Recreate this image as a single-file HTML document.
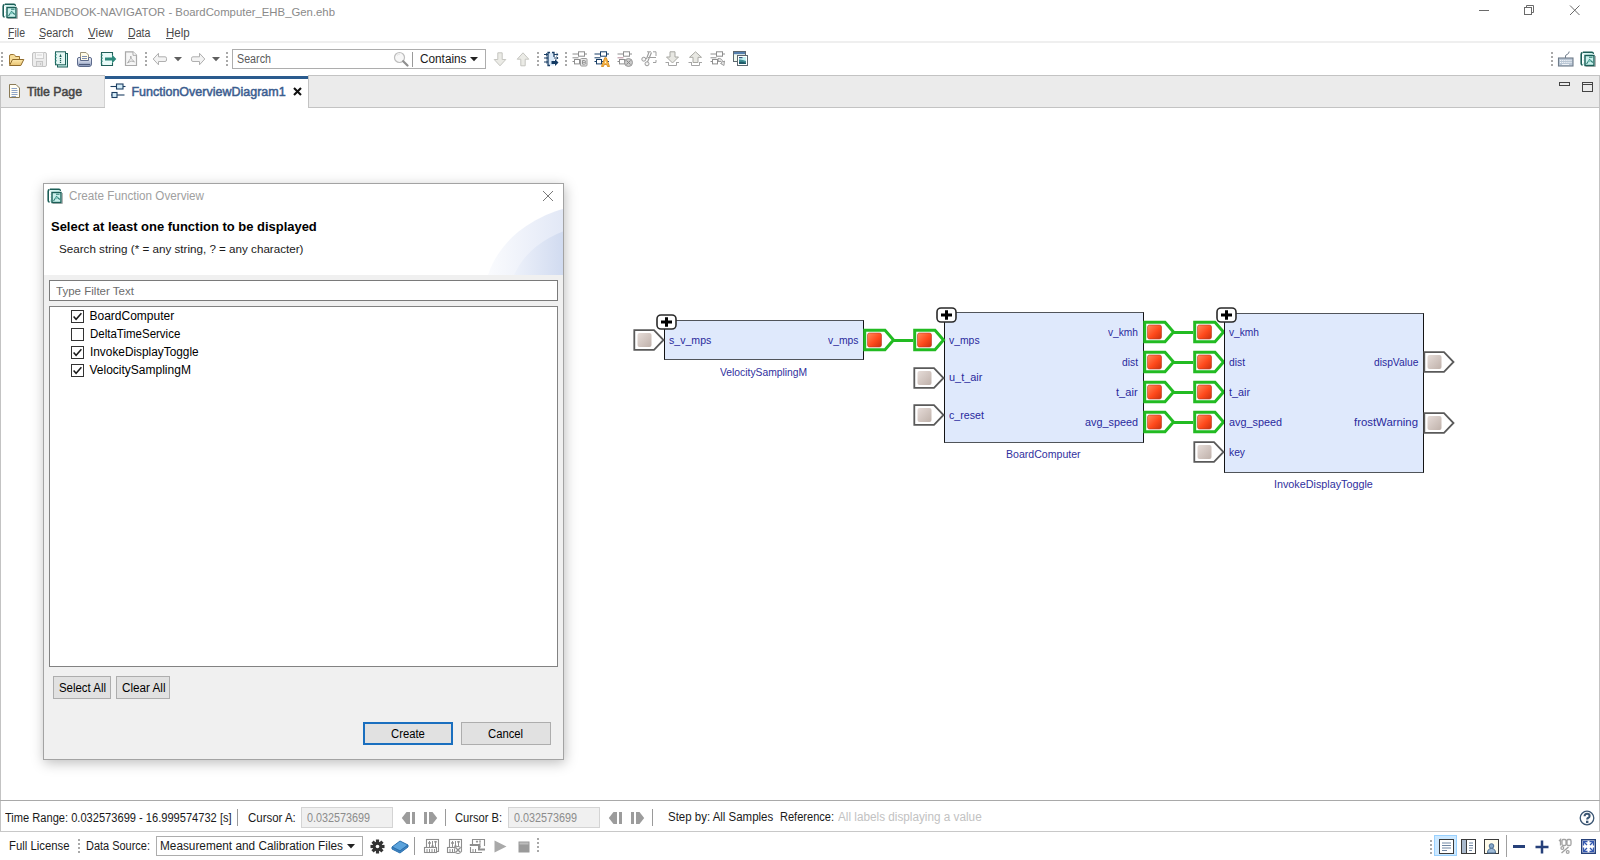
<!DOCTYPE html>
<html><head><meta charset="utf-8"><style>html,body{margin:0;padding:0;width:1600px;height:860px;overflow:hidden;background:#fff;position:relative}svg{display:block}</style></head><body>
<div style="position:absolute;left:0px;top:0px;width:1600px;height:860px;background:#fff"></div>
<div style="position:absolute;left:24.00px;top:6.67px;font:normal 11.5px 'Liberation Sans';line-height:11.5px;white-space:pre;color:#8a8a8a;transform:scaleX(0.9870);transform-origin:0 0;">EHANDBOOK-NAVIGATOR - BoardComputer_EHB_Gen.ehb</div>
<div style="position:absolute;left:1479px;top:10px;width:10px;height:1px;background:#6a6a6a"></div>
<svg style="position:absolute;left:1522px;top:3px;" width="14" height="14" viewBox="0 0 14 14"><rect x="2.5" y="4.5" width="7" height="7" fill="none" stroke="#6a6a6a"/><path d="M4.5 4.5 V2.5 H11.5 V9.5 H9.5" fill="none" stroke="#6a6a6a"/></svg>
<svg style="position:absolute;left:1568px;top:4px;" width="13" height="13" viewBox="0 0 13 13"><path d="M2 1.5 L11.5 11 M11.5 1.5 L2 11" stroke="#6a6a6a" stroke-width="1"/></svg>
<div style="position:absolute;left:8.00px;top:27.04px;font:normal 12px 'Liberation Sans';line-height:12px;white-space:pre;color:#4a4a4a;transform:scaleX(0.8788);transform-origin:0 0;">File</div>
<div style="position:absolute;left:39.00px;top:27.04px;font:normal 12px 'Liberation Sans';line-height:12px;white-space:pre;color:#4a4a4a;transform:scaleX(0.9071);transform-origin:0 0;">Search</div>
<div style="position:absolute;left:88.00px;top:27.04px;font:normal 12px 'Liberation Sans';line-height:12px;white-space:pre;color:#4a4a4a;transform:scaleX(0.9691);transform-origin:0 0;">View</div>
<div style="position:absolute;left:127.75px;top:27.04px;font:normal 12px 'Liberation Sans';line-height:12px;white-space:pre;color:#4a4a4a;transform:scaleX(0.8872);transform-origin:0 0;">Data</div>
<div style="position:absolute;left:165.75px;top:27.04px;font:normal 12px 'Liberation Sans';line-height:12px;white-space:pre;color:#4a4a4a;transform:scaleX(0.9620);transform-origin:0 0;">Help</div>
<div style="position:absolute;left:7.5px;top:38px;width:6px;height:1px;background:#505050"></div>
<div style="position:absolute;left:39px;top:38px;width:6px;height:1px;background:#505050"></div>
<div style="position:absolute;left:88px;top:38px;width:6.5px;height:1px;background:#505050"></div>
<div style="position:absolute;left:128px;top:38px;width:6.5px;height:1px;background:#505050"></div>
<div style="position:absolute;left:166px;top:38px;width:6.5px;height:1px;background:#505050"></div>
<div style="position:absolute;left:0px;top:41px;width:1600px;height:2px;background:#efefef"></div>
<svg style="position:absolute;left:2px;top:3px;" width="17" height="17" viewBox="0 0 17 17">
<defs><linearGradient id="apg" x1="0" y1="0" x2="1" y2="1"><stop offset="0" stop-color="#e6fbf8"/><stop offset="1" stop-color="#a9e3db"/></linearGradient></defs>
<path d="M5.5 15.5 H15.5 V5" fill="none" stroke="#b5b5b5" stroke-width="1"/>
<path d="M3 1.2 H12 Q13.2 1.2 13.2 2.6 V3" fill="none" stroke="#1b5e57" stroke-width="1.5"/>
<path d="M2.6 1.5 Q1.2 1.8 1.2 3.2 V12.6 Q1.2 14 2.6 14" fill="none" stroke="#1b5e57" stroke-width="1.6"/>
<rect x="3" y="2" width="9.5" height="12" fill="url(#apg)"/>
<path d="M2.5 4 L4 4.8 L2.5 5.6 M2.5 7 L4 7.8 L2.5 8.6 M2.5 10 L4 10.8 L2.5 11.6" fill="none" stroke="#fff" stroke-width="0.9"/>
<rect x="5" y="4.5" width="9" height="10" fill="#c9f1ec" stroke="#1b5e57" stroke-width="1.4"/>
<path d="M6.5 13 L9.5 8.5 L12.8 11.5 M9 6.3 H12.5" fill="none" stroke="#2f7d74" stroke-width="1.1"/>
<circle cx="9.5" cy="10" r="1.2" fill="#7fc8bf"/>
</svg>
<div style="position:absolute;left:1px;top:52px;width:2px;height:2px;background:#a9a9a9"></div>
<div style="position:absolute;left:1px;top:56px;width:2px;height:2px;background:#a9a9a9"></div>
<div style="position:absolute;left:1px;top:60px;width:2px;height:2px;background:#a9a9a9"></div>
<div style="position:absolute;left:1px;top:64px;width:2px;height:2px;background:#a9a9a9"></div>
<svg style="position:absolute;left:8px;top:52px;" width="17" height="15" viewBox="0 0 17 15"><defs><linearGradient id="fdg" x1="0" y1="0" x2="0" y2="1"><stop offset="0" stop-color="#fde9ad"/><stop offset="1" stop-color="#e8c270"/></linearGradient></defs>
<path d="M1.5 12.5 V4 Q1.5 2.5 3 2.5 H5.5 Q6.5 2.5 7 3.5 L7.5 4.5 H11.5 V7" fill="#f6dc98" stroke="#9b7431" stroke-width="1"/>
<path d="M1.5 13.5 L4.5 7.5 H15.8 L12.8 13.5 Z" fill="url(#fdg)" stroke="#8e6a2b" stroke-width="1"/></svg>
<svg style="position:absolute;left:31px;top:51px;" width="17" height="17" viewBox="0 0 17 17"><rect x="1.5" y="1.5" width="14" height="14" rx="1.5" fill="#ececec" stroke="#c2c2c2"/><rect x="4.5" y="1.5" width="8" height="6" fill="#f7f7f7" stroke="#cfcfcf"/><path d="M6 4 H11" stroke="#d5d5d5"/><rect x="5.5" y="10.5" width="6" height="5" fill="#e3e3e3" stroke="#c6c6c6"/><path d="M9.5 12 V14" stroke="#c6c6c6"/></svg>
<svg style="position:absolute;left:54px;top:51px;" width="15" height="17" viewBox="0 0 15 17"><rect x="3.5" y="2.5" width="10" height="13.5" fill="#c8efe9" stroke="#1e615a"/>
<rect x="1.5" y="0.8" width="10" height="13" fill="#e4f7f4" stroke="#1e615a"/>
<path d="M0.8 3 L2.5 3.8 L0.8 4.6 M0.8 6 L2.5 6.8 L0.8 7.6 M0.8 9 L2.5 9.8 L0.8 10.6 M0.8 12 L2.5 12.8" fill="none" stroke="#2a8075" stroke-width="0.9"/>
<path d="M6.5 2.8 L5.3 6 H7.7 Z" fill="#1e615a"/><path d="M6.5 7 V12" stroke="#1e615a" stroke-width="1.3" stroke-dasharray="1.2 0.8"/></svg>
<svg style="position:absolute;left:76px;top:51px;" width="17" height="17" viewBox="0 0 17 17"><defs><linearGradient id="prg" x1="0" y1="0" x2="0" y2="1"><stop offset="0" stop-color="#f4f6fb"/><stop offset="1" stop-color="#8e9dc0"/></linearGradient></defs>
<path d="M4.5 9.5 V1.5 H10 L12.5 4 V9.5" fill="#fffbe8" stroke="#9c9378"/>
<path d="M6 5.5 H11 M6 7.5 H11" stroke="#7d8fb2" stroke-width="1"/>
<path d="M1.5 8 Q1.5 6.5 3 6.5 H4.5 V9.5 H12.5 V6.5 H14 Q15.5 6.5 15.5 8 V13 Q15.5 15.5 13 15.5 H4 Q1.5 15.5 1.5 13 Z" fill="url(#prg)" stroke="#5d6b8c"/>
<path d="M3 13.5 H14" stroke="#4e5b7a" stroke-width="1.2"/></svg>
<svg style="position:absolute;left:100px;top:51px;" width="17" height="17" viewBox="0 0 17 17"><path d="M12.5 4.5 V1.5 H1.5 V14.5 H12.5 V12" fill="#e9fbf9" stroke="#215f59" stroke-width="1.1"/>
<path d="M0.8 3.5 L2.5 4.2 L0.8 5 M0.8 6.5 L2.5 7.2 L0.8 8 M0.8 9.5 L2.5 10.2 L0.8 11 M0.8 12.5 L2.5 13.2" fill="none" stroke="#2a8075" stroke-width="0.9"/>
<path d="M5 6.5 H12 V3.6 L16.3 8 L12 12.4 V9.5 H5 Z" fill="#2e8a7c"/></svg>
<svg style="position:absolute;left:124px;top:51px;" width="14" height="16" viewBox="0 0 14 16"><path d="M1.5 0.8 H9 L12.5 4.3 V14.5 H1.5 Z" fill="#f6f6f6" stroke="#a9a9a9" stroke-width="1.2"/><path d="M9 0.8 V4.3 H12.5" fill="#fff" stroke="#a9a9a9"/><path d="M3.5 12 L6.5 7.5 L6.8 5 L7.3 7.8 L10.5 10.8 L7 10 Z" fill="none" stroke="#aaa" stroke-width="0.9"/></svg>
<div style="position:absolute;left:145px;top:52px;width:2px;height:2px;background:#a9a9a9"></div>
<div style="position:absolute;left:145px;top:56px;width:2px;height:2px;background:#a9a9a9"></div>
<div style="position:absolute;left:145px;top:60px;width:2px;height:2px;background:#a9a9a9"></div>
<div style="position:absolute;left:145px;top:64px;width:2px;height:2px;background:#a9a9a9"></div>
<svg style="position:absolute;left:152px;top:52px;" width="16" height="15" viewBox="0 0 16 15"><path d="M1.2 7 L6.5 1.3 V4.8 H13 Q14.5 4.8 14.5 6.3 V8 Q14.5 9.5 13 9.5 H6.5 V12.8 Z" fill="#f3f3f3" stroke="#b0b0b0"/></svg>
<svg style="position:absolute;left:174px;top:57px;" width="8" height="5" viewBox="0 0 8 5"><path d="M0 0 H8 L4 4.2 Z" fill="#5f5f5f"/></svg>
<svg style="position:absolute;left:190px;top:52px;" width="16" height="15" viewBox="0 0 16 15"><path d="M14.8 7 L9.5 1.3 V4.8 H3 Q1.5 4.8 1.5 6.3 V8 Q1.5 9.5 3 9.5 H9.5 V12.8 Z" fill="#f3f3f3" stroke="#b0b0b0"/></svg>
<svg style="position:absolute;left:212px;top:57px;" width="8" height="5" viewBox="0 0 8 5"><path d="M0 0 H8 L4 4.2 Z" fill="#5f5f5f"/></svg>
<div style="position:absolute;left:226px;top:52px;width:2px;height:2px;background:#a9a9a9"></div>
<div style="position:absolute;left:226px;top:56px;width:2px;height:2px;background:#a9a9a9"></div>
<div style="position:absolute;left:226px;top:60px;width:2px;height:2px;background:#a9a9a9"></div>
<div style="position:absolute;left:226px;top:64px;width:2px;height:2px;background:#a9a9a9"></div>
<div style="position:absolute;left:232px;top:49px;width:254px;height:20px;background:#fff;border:1px solid #adadad;box-sizing:border-box"></div>
<div style="position:absolute;left:237.00px;top:53.34px;font:normal 12px 'Liberation Sans';line-height:12px;white-space:pre;color:#5a5a5a;transform:scaleX(0.8940);transform-origin:0 0;">Search</div>
<svg style="position:absolute;left:393px;top:51px;" width="16" height="16" viewBox="0 0 16 16"><circle cx="6.5" cy="6.5" r="5" fill="#f7f7f7" stroke="#bdbdbd" stroke-width="1.2"/><path d="M4 4.5 Q5 3 7 3" stroke="#e0e0e0" fill="none"/><path d="M10.2 10.2 L14.5 14.5" stroke="#8f8f8f" stroke-width="2.2" stroke-linecap="round"/></svg>
<div style="position:absolute;left:412px;top:52px;width:1px;height:15px;background:#9a9a9a"></div>
<div style="position:absolute;left:419.50px;top:53.34px;font:normal 12px 'Liberation Sans';line-height:12px;white-space:pre;color:#1a1a1a;transform:scaleX(0.9815);transform-origin:0 0;">Contains</div>
<svg style="position:absolute;left:470px;top:57px;" width="8" height="5" viewBox="0 0 8 5"><path d="M0 0 H8 L4 4.2 Z" fill="#222"/></svg>
<svg style="position:absolute;left:493px;top:52px;" width="14" height="15" viewBox="0 0 14 15"><path d="M4.8 0.8 H9.2 V7.5 H12.8 L7 13.8 L1.2 7.5 H4.8 Z" fill="#ebebe6" stroke="#c5c5c0"/></svg>
<svg style="position:absolute;left:516px;top:52px;" width="14" height="15" viewBox="0 0 14 15"><path d="M4.8 13.8 H9.2 V7.2 H12.8 L7 0.8 L1.2 7.2 H4.8 Z" fill="#ebebe6" stroke="#c5c5c0"/></svg>
<div style="position:absolute;left:537px;top:52px;width:2px;height:2px;background:#a9a9a9"></div>
<div style="position:absolute;left:537px;top:56px;width:2px;height:2px;background:#a9a9a9"></div>
<div style="position:absolute;left:537px;top:60px;width:2px;height:2px;background:#a9a9a9"></div>
<div style="position:absolute;left:537px;top:64px;width:2px;height:2px;background:#a9a9a9"></div>
<svg style="position:absolute;left:543px;top:51px;" width="16" height="16" viewBox="0 0 16 16"><rect x="5" y="1.5" width="6" height="13" fill="#d9e8f7"/>
<path d="M7 1.5 H5 V14.5 H7 M9 1.5 H11 V6" fill="none" stroke="#1b3f66" stroke-width="1.3"/>
<path d="M1 3.5 H4.5 M1 7 H4.5 M1 11 H4.5 M11 3.5 H15 M11 7 H15" stroke="#1b3f66" stroke-width="1"/>
<path d="M3 2.2 L4.6 3.5 L3 4.8 M3 5.7 L4.6 7 L3 8.3 M3 9.7 L4.6 11 L3 12.3 M13.5 2.2 L15.1 3.5 L13.5 4.8 M13.5 5.7 L15.1 7 L13.5 8.3" fill="none" stroke="#1b3f66" stroke-width="0.9"/>
<path d="M8.5 10 H12 V8 L15.5 11.5 L12 15 V13 H8.5 Z" fill="#123a63"/></svg>
<div style="position:absolute;left:565px;top:52px;width:2px;height:2px;background:#a9a9a9"></div>
<div style="position:absolute;left:565px;top:56px;width:2px;height:2px;background:#a9a9a9"></div>
<div style="position:absolute;left:565px;top:60px;width:2px;height:2px;background:#a9a9a9"></div>
<div style="position:absolute;left:565px;top:64px;width:2px;height:2px;background:#a9a9a9"></div>
<svg style="position:absolute;left:572px;top:51px;" width="16" height="16" viewBox="0 0 16 16"><path d="M0.5 3 H15" stroke="#8e8e8e" stroke-width="1"/><rect x="6.5" y="0.8" width="6" height="4.4" fill="#fff" stroke="#8e8e8e"/>
<path d="M0.5 6.8 H6.5" stroke="#8e8e8e" stroke-width="1"/>
<path d="M0.5 10.5 H15" stroke="#8e8e8e"/><rect x="2.5" y="8.5" width="5" height="4.4" fill="#fff" stroke="#8e8e8e"/><rect x="8.5" y="7.5" width="6.5" height="7.5" rx="1" fill="#e9e9e9" stroke="#9a9a9a"/><path d="M10.5 9.5 H12.5 Q13.5 9.5 13.5 10.5 Q13.5 11.3 12.5 11.3 H10.5 M12.5 11.3 Q13.8 11.3 13.8 12.3 Q13.8 13.2 12.5 13.2 H10.5 V9.5" fill="none" stroke="#8a8a8a" stroke-width="0.9"/></svg>
<svg style="position:absolute;left:594px;top:51px;" width="16" height="16" viewBox="0 0 16 16"><path d="M0.5 3 H15" stroke="#183d66" stroke-width="1"/><rect x="6.5" y="0.8" width="6" height="4.4" fill="#fff" stroke="#183d66"/>
<path d="M0.5 6.8 H6.5" stroke="#183d66" stroke-width="1"/>
<path d="M0.5 10.5 H15" stroke="#183d66"/><rect x="2.5" y="8.5" width="5" height="4.4" fill="#fff" stroke="#183d66"/><path d="M7.5 15.5 L10.7 6.8 H12.3 L15.5 15.5 H13.5 L12.8 13.5 H10.2 L9.5 15.5 Z" fill="#f5b54a" stroke="#d48a1c" stroke-width="0.9"/><path d="M10.8 12 H12.2 L11.5 9.6 Z" fill="#fff3d6"/></svg>
<svg style="position:absolute;left:617px;top:51px;" width="16" height="16" viewBox="0 0 16 16"><path d="M0.5 3 H15" stroke="#8e8e8e" stroke-width="1"/><rect x="6.5" y="0.8" width="6" height="4.4" fill="#fff" stroke="#8e8e8e"/>
<path d="M0.5 6.8 H6.5" stroke="#b58a99" stroke-width="1"/>
<path d="M0.5 10.5 H15" stroke="#8e8e8e"/><rect x="2.5" y="8.5" width="5" height="4.4" fill="#fff" stroke="#8e8e8e"/><circle cx="11.5" cy="11.5" r="4" fill="#c9c9c9" stroke="#9a9a9a"/><path d="M9.5 9.5 L13.5 13.5 M13.5 9.5 L9.5 13.5" stroke="#8a8a8a" stroke-width="1"/></svg>
<svg style="position:absolute;left:641px;top:51px;" width="16" height="16" viewBox="0 0 16 16"><path d="M6 0.8 H10 M12 0.8 H15 V5 M15 9 V11.5 H12" fill="none" stroke="#a0a0a0"/><path d="M8 1 L5.5 8 M10.5 1.5 L6.5 11" stroke="#9a9a9a" stroke-width="1.1"/><path d="M7 6.5 H15" stroke="#a0a0a0"/><circle cx="2.8" cy="8.2" r="2" fill="#f5f5f5" stroke="#9a9a9a"/><circle cx="6" cy="12.8" r="2" fill="#f5f5f5" stroke="#9a9a9a"/></svg>
<svg style="position:absolute;left:665px;top:51px;" width="15" height="16" viewBox="0 0 15 16"><path d="M3.5 14.5 H11.5 V11 M3.5 14.5 V11" fill="none" stroke="#a5a5a5"/><path d="M0.5 11.5 H3.5 M11.5 11.5 H14" stroke="#a5a5a5"/><path d="M5 0.8 H10 V6 H13.5 L7.5 12 L1.5 6 H5 Z" fill="#e8e8e3" stroke="#a8a8a3"/></svg>
<svg style="position:absolute;left:688px;top:51px;" width="15" height="16" viewBox="0 0 15 16"><path d="M3.5 14.5 H11.5 V11 M3.5 14.5 V11" fill="none" stroke="#a5a5a5"/><path d="M0.5 11.5 H3.5 M11.5 11.5 H14" stroke="#a5a5a5"/><path d="M5 11.5 H10 V6.3 H13.5 L7.5 0.8 L1.5 6.3 H5 Z" fill="#e8e8e3" stroke="#a8a8a3"/></svg>
<svg style="position:absolute;left:710px;top:51px;" width="16" height="16" viewBox="0 0 16 16"><path d="M0.5 3 H15" stroke="#8e8e8e" stroke-width="1"/><rect x="6.5" y="0.8" width="6" height="4.4" fill="#fff" stroke="#8e8e8e"/>
<path d="M0.5 6.8 H6.5" stroke="#8e8e8e" stroke-width="1"/>
<path d="M0.5 10.5 H15" stroke="#8e8e8e"/><rect x="2.5" y="8.5" width="5" height="4.4" fill="#fff" stroke="#8e8e8e"/><path d="M8 7.5 Q12 7 13 11 L14.5 10 L14 14.5 L10.5 12.5 L12 12 Q11.5 9.5 8.5 10.5 Z" fill="#e6e6e6" stroke="#9a9a9a" stroke-width="0.9"/></svg>
<svg style="position:absolute;left:732px;top:50px;" width="17" height="17" viewBox="0 0 17 17"><rect x="1.5" y="1.5" width="12" height="10" fill="#f2faf0" stroke="#5d6870"/><rect x="2" y="2" width="11" height="2.2" fill="#557fae"/>
<rect x="5.5" y="5.5" width="10" height="10" fill="#fff" stroke="#5d6870"/><rect x="7" y="7" width="7" height="7" fill="#c5f2f2"/><path d="M7 9.5 Q10 9 14 11 V14 H7 Z" fill="#3f8c92"/><path d="M7 12 Q10 11 14 13 V14 H7 Z" fill="#1f5a68"/><path d="M7 7.6 H10.5" stroke="#34577f" stroke-width="1.2"/></svg>
<div style="position:absolute;left:1551px;top:52px;width:2px;height:2px;background:#a9a9a9"></div>
<div style="position:absolute;left:1551px;top:56px;width:2px;height:2px;background:#a9a9a9"></div>
<div style="position:absolute;left:1551px;top:60px;width:2px;height:2px;background:#a9a9a9"></div>
<div style="position:absolute;left:1551px;top:64px;width:2px;height:2px;background:#a9a9a9"></div>
<svg style="position:absolute;left:1557px;top:50px;" width="17" height="17" viewBox="0 0 17 17"><rect x="1.5" y="8" width="14.5" height="8" fill="#b9c6d4" stroke="#6f7c8a" stroke-width="1.1"/><path d="M3 10.5 H14.5 M3 12.5 H14.5" stroke="#f4f7fb" stroke-width="1" stroke-dasharray="1.2 0.9"/><path d="M5 14.5 H12" stroke="#f4f7fb" stroke-width="0.9"/><path d="M8.5 8 V6 Q8.5 5 10 4.5 Q12 3.8 12.2 1.5" fill="none" stroke="#6f7c8a" stroke-width="1"/></svg>
<svg style="position:absolute;left:1580px;top:51px;" width="17" height="17" viewBox="0 0 17 17">
<defs><linearGradient id="apg" x1="0" y1="0" x2="1" y2="1"><stop offset="0" stop-color="#e6fbf8"/><stop offset="1" stop-color="#a9e3db"/></linearGradient></defs>
<path d="M5.5 15.5 H15.5 V5" fill="none" stroke="#b5b5b5" stroke-width="1"/>
<path d="M3 1.2 H12 Q13.2 1.2 13.2 2.6 V3" fill="none" stroke="#1b5e57" stroke-width="1.5"/>
<path d="M2.6 1.5 Q1.2 1.8 1.2 3.2 V12.6 Q1.2 14 2.6 14" fill="none" stroke="#1b5e57" stroke-width="1.6"/>
<rect x="3" y="2" width="9.5" height="12" fill="url(#apg)"/>
<path d="M2.5 4 L4 4.8 L2.5 5.6 M2.5 7 L4 7.8 L2.5 8.6 M2.5 10 L4 10.8 L2.5 11.6" fill="none" stroke="#fff" stroke-width="0.9"/>
<rect x="5" y="4.5" width="9" height="10" fill="#c9f1ec" stroke="#1b5e57" stroke-width="1.4"/>
<path d="M6.5 13 L9.5 8.5 L12.8 11.5 M9 6.3 H12.5" fill="none" stroke="#2f7d74" stroke-width="1.1"/>
<circle cx="9.5" cy="10" r="1.2" fill="#7fc8bf"/>
</svg>
<div style="position:absolute;left:0px;top:75px;width:1600px;height:33px;background:#ebebeb;border:1px solid #c3c3c3;box-sizing:border-box"></div>
<div style="position:absolute;left:104px;top:76px;width:1px;height:31px;background:#d2d2d2"></div>
<svg style="position:absolute;left:8px;top:83px;" width="13" height="16" viewBox="0 0 13 16"><path d="M1.5 1.5 H8 L11.5 5 V14.5 H1.5 Z" fill="#fffdf4" stroke="#8a7a55"/><path d="M3.5 5.5 H9 M3.5 7.5 H9.5 M3.5 9.5 H9.5 M3.5 11.5 H9.5 M3.5 13.5 H8" stroke="#8ea4c8"/></svg>
<div style="position:absolute;left:27.00px;top:85.62px;font:normal 12.5px 'Liberation Sans';line-height:12.5px;white-space:pre;color:#454545;transform:scaleX(0.9852);transform-origin:0 0;-webkit-text-stroke:0.5px #454545;">Title Page</div>
<div style="position:absolute;left:105px;top:75px;width:204px;height:33px;background:#fff;border-right:1px solid #c3c3c3;box-sizing:border-box"></div>
<div style="position:absolute;left:105px;top:75px;width:203px;height:1px;background:#fff"></div>
<div style="position:absolute;left:105px;top:76px;width:203px;height:3px;background:#2a5b8e"></div>
<svg style="position:absolute;left:110px;top:83px;" width="16" height="16" viewBox="0 0 16 16"><path d="M0.5 3.5 H15.5" stroke="#1d3f63" stroke-width="1.1"/><rect x="6.5" y="1" width="6.5" height="5" fill="#d4ecf8" stroke="#1d3f63" stroke-width="1.1"/><path d="M1 12 H14.5" stroke="#1d3f63" stroke-width="1.1"/><rect x="2" y="9.5" width="5" height="5" fill="#d4ecf8" stroke="#1d3f63" stroke-width="1.1"/></svg>
<div style="position:absolute;left:131.40px;top:85.62px;font:normal 12.5px 'Liberation Sans';line-height:12.5px;white-space:pre;color:#3b5d8f;-webkit-text-stroke:0.5px #3b5d8f;">FunctionOverviewDiagram1</div>
<svg style="position:absolute;left:293px;top:87px;" width="9" height="9" viewBox="0 0 9 9"><path d="M1 1 L8 8 M8 1 L1 8" stroke="#111" stroke-width="2.1"/></svg>
<div style="position:absolute;left:1559px;top:82px;width:11px;height:4px;border:1px solid #444;box-sizing:border-box"></div>
<div style="position:absolute;left:1582px;top:82px;width:11px;height:10px;border:1px solid #444;box-sizing:border-box"></div>
<div style="position:absolute;left:1583px;top:84px;width:9px;height:1px;background:#444"></div>
<div style="position:absolute;left:0px;top:108px;width:1px;height:692px;background:#c3c3c3"></div>
<div style="position:absolute;left:1599px;top:108px;width:1px;height:692px;background:#c3c3c3"></div>
<div style="position:absolute;left:0px;top:800px;width:1600px;height:1px;background:#a9a9a9"></div>
<div style="position:absolute;left:0px;top:801px;width:1px;height:30px;background:#c3c3c3"></div>
<div style="position:absolute;left:1599px;top:801px;width:1px;height:30px;background:#c3c3c3"></div>
<div style="position:absolute;left:0px;top:831px;width:1600px;height:1px;background:#c8c8c8"></div>
<div style="position:absolute;left:5.00px;top:812.04px;font:normal 12px 'Liberation Sans';line-height:12px;white-space:pre;color:#1a1a1a;transform:scaleX(0.9246);transform-origin:0 0;">Time Range: 0.032573699 - 16.999574732 [s]</div>
<div style="position:absolute;left:237px;top:809px;width:1px;height:17px;background:#9a9a9a"></div>
<div style="position:absolute;left:247.60px;top:812.04px;font:normal 12px 'Liberation Sans';line-height:12px;white-space:pre;color:#1a1a1a;transform:scaleX(0.9557);transform-origin:0 0;">Cursor A:</div>
<div style="position:absolute;left:301px;top:807px;width:92px;height:21px;background:#f0f0f0;border:1px solid #d4d4d4;box-sizing:border-box"></div>
<div style="position:absolute;left:307.00px;top:812.04px;font:normal 12px 'Liberation Sans';line-height:12px;white-space:pre;color:#8c8c8c;transform:scaleX(0.8990);transform-origin:0 0;">0.032573699</div>
<svg style="position:absolute;left:401px;top:812px;" width="15" height="12" viewBox="0 0 15 12"><path d="M0.8 6 L5.5 0 H9 V12 H5.5 Z" fill="#9c9c9c"/><rect x="11" y="0" width="3" height="12" fill="#9c9c9c"/></svg>
<svg style="position:absolute;left:423px;top:812px;" width="15" height="12" viewBox="0 0 15 12"><rect x="1" y="0" width="3" height="12" fill="#9c9c9c"/><path d="M6 0 H9.5 L14.2 6 L9.5 12 H6 Z" fill="#9c9c9c"/></svg>
<div style="position:absolute;left:445px;top:809px;width:1px;height:17px;background:#9a9a9a"></div>
<div style="position:absolute;left:455.40px;top:812.04px;font:normal 12px 'Liberation Sans';line-height:12px;white-space:pre;color:#1a1a1a;transform:scaleX(0.9292);transform-origin:0 0;">Cursor B:</div>
<div style="position:absolute;left:508px;top:807px;width:92px;height:21px;background:#f0f0f0;border:1px solid #d4d4d4;box-sizing:border-box"></div>
<div style="position:absolute;left:514.00px;top:812.04px;font:normal 12px 'Liberation Sans';line-height:12px;white-space:pre;color:#8c8c8c;transform:scaleX(0.8990);transform-origin:0 0;">0.032573699</div>
<svg style="position:absolute;left:607.5px;top:812px;" width="15" height="12" viewBox="0 0 15 12"><path d="M0.8 6 L5.5 0 H9 V12 H5.5 Z" fill="#9c9c9c"/><rect x="11" y="0" width="3" height="12" fill="#9c9c9c"/></svg>
<svg style="position:absolute;left:629.5px;top:812px;" width="15" height="12" viewBox="0 0 15 12"><rect x="1" y="0" width="3" height="12" fill="#9c9c9c"/><path d="M6 0 H9.5 L14.2 6 L9.5 12 H6 Z" fill="#9c9c9c"/></svg>
<div style="position:absolute;left:652px;top:809px;width:1px;height:17px;background:#9a9a9a"></div>
<div style="position:absolute;left:668.30px;top:811.04px;font:normal 12px 'Liberation Sans';line-height:12px;white-space:pre;color:#1a1a1a;transform:scaleX(0.9558);transform-origin:0 0;">Step by: All Samples</div>
<div style="position:absolute;left:780.30px;top:811.04px;font:normal 12px 'Liberation Sans';line-height:12px;white-space:pre;color:#1a1a1a;transform:scaleX(0.9199);transform-origin:0 0;">Reference:</div>
<div style="position:absolute;left:838.30px;top:811.04px;font:normal 12px 'Liberation Sans';line-height:12px;white-space:pre;color:#c2c2c2;transform:scaleX(0.9791);transform-origin:0 0;">All labels displaying a value</div>
<svg style="position:absolute;left:1578px;top:809px;" width="18" height="18" viewBox="0 0 18 18"><circle cx="9" cy="9" r="6.8" fill="#fff" stroke="#3b5673" stroke-width="1.3"/><path d="M6.6 7.2 Q6.6 4.8 9.1 4.8 Q11.6 4.8 11.6 6.9 Q11.6 8.3 10 9 Q9.2 9.4 9.2 10.6" fill="none" stroke="#3b5673" stroke-width="2.1"/><rect x="8" y="11.7" width="2.4" height="2.4" fill="#3b5673"/></svg>
<div style="position:absolute;left:8.50px;top:840.04px;font:normal 12px 'Liberation Sans';line-height:12px;white-space:pre;color:#1a1a1a;transform:scaleX(0.9449);transform-origin:0 0;">Full License</div>
<div style="position:absolute;left:78px;top:839px;width:2px;height:2px;background:#a9a9a9"></div>
<div style="position:absolute;left:78px;top:843px;width:2px;height:2px;background:#a9a9a9"></div>
<div style="position:absolute;left:78px;top:847px;width:2px;height:2px;background:#a9a9a9"></div>
<div style="position:absolute;left:78px;top:851px;width:2px;height:2px;background:#a9a9a9"></div>
<div style="position:absolute;left:86.00px;top:840.04px;font:normal 12px 'Liberation Sans';line-height:12px;white-space:pre;color:#1a1a1a;transform:scaleX(0.9137);transform-origin:0 0;">Data Source:</div>
<div style="position:absolute;left:156px;top:836px;width:207px;height:20px;background:#fff;border:1px solid #adadad;box-sizing:border-box"></div>
<div style="position:absolute;left:160.30px;top:840.04px;font:normal 12px 'Liberation Sans';line-height:12px;white-space:pre;color:#1a1a1a;transform:scaleX(0.9834);transform-origin:0 0;">Measurement and Calibration Files</div>
<svg style="position:absolute;left:347px;top:844px;" width="8" height="5" viewBox="0 0 8 5"><path d="M0 0 H8 L4 4.5 Z" fill="#222"/></svg>
<svg style="position:absolute;left:370px;top:839px;" width="15" height="15" viewBox="0 0 15 15"><g transform="translate(7.5 7.5)"><circle r="4.8" fill="#333"/><g fill="#333"><rect x="-1.6" y="-7" width="3.2" height="3.5" transform="rotate(0)"/><rect x="-1.6" y="-7" width="3.2" height="3.5" transform="rotate(45)"/><rect x="-1.6" y="-7" width="3.2" height="3.5" transform="rotate(90)"/><rect x="-1.6" y="-7" width="3.2" height="3.5" transform="rotate(135)"/><rect x="-1.6" y="-7" width="3.2" height="3.5" transform="rotate(180)"/><rect x="-1.6" y="-7" width="3.2" height="3.5" transform="rotate(225)"/><rect x="-1.6" y="-7" width="3.2" height="3.5" transform="rotate(270)"/><rect x="-1.6" y="-7" width="3.2" height="3.5" transform="rotate(315)"/></g><circle r="1.8" fill="#fff"/></g></svg>
<svg style="position:absolute;left:391px;top:839px;" width="18" height="15" viewBox="0 0 18 15"><path d="M1 8 L9 2 L17 6 L9 12 Z" fill="#5ba3dc" stroke="#2a6fae"/><path d="M1 8 V10 L9 14 L17 8 V6 L9 12 Z" fill="#3e86c4" stroke="#2a6fae"/></svg>
<div style="position:absolute;left:414px;top:837px;width:1px;height:18px;background:#9a9a9a"></div>
<svg style="position:absolute;left:423px;top:838px;" width="17" height="17" viewBox="0 0 17 17"><rect x="3.5" y="1.5" width="12" height="12" fill="#fff" stroke="#8e8e8e" stroke-width="1.1"/><path d="M6.5 3 V9.5 M9.5 3 V9.5 M12.5 3 V9.5" stroke="#8e8e8e"/><rect x="5.3" y="4" width="2.4" height="2" fill="#8e8e8e"/><rect x="8.3" y="7.5" width="2.4" height="2" fill="#8e8e8e"/><rect x="11.3" y="3" width="2.4" height="1.6" fill="#8e8e8e"/><rect x="1.5" y="9.5" width="12" height="5" fill="#fff" stroke="#8e8e8e" stroke-width="1.1"/><path d="M4 11 V14 M6.5 11 V14 M9 11 V14 M11.5 11 V14" stroke="#8e8e8e"/></svg>
<svg style="position:absolute;left:446px;top:838px;" width="17" height="17" viewBox="0 0 17 17"><rect x="3.5" y="1.5" width="12" height="12" fill="#fff" stroke="#8e8e8e" stroke-width="1.1"/><path d="M6.5 3 V9.5 M9.5 3 V9.5 M12.5 3 V9.5" stroke="#8e8e8e"/><rect x="5.3" y="4" width="2.4" height="2" fill="#8e8e8e"/><rect x="8.3" y="7.5" width="2.4" height="2" fill="#8e8e8e"/><rect x="11.3" y="3" width="2.4" height="1.6" fill="#8e8e8e"/><rect x="1.5" y="9.5" width="12" height="5" fill="#fff" stroke="#8e8e8e" stroke-width="1.1"/><path d="M4 11 V14 M6.5 11 V14 M9 11 V14 M11.5 11 V14" stroke="#8e8e8e"/><circle cx="12" cy="12" r="3.6" fill="#fff" stroke="#8e8e8e" stroke-width="1"/><path d="M10 10 L14 14 M14 10 L10 14" stroke="#8e8e8e" stroke-width="1.3"/></svg>
<svg style="position:absolute;left:469px;top:838px;" width="17" height="17" viewBox="0 0 17 17"><path d="M3.5 6 V1.5 H15.5 V8" fill="none" stroke="#8e8e8e" stroke-width="1.1"/><path d="M7 4 L8 2.8 L9 4 Z M11 3 V9 M10 3 H12 M10 9 H12" fill="#8e8e8e" stroke="#8e8e8e" stroke-width="0.9"/><path d="M0.8 7 H10 V11.5 H16" fill="none" stroke="#8e8e8e" stroke-width="2"/><path d="M1.5 9 V14.5 H13" fill="none" stroke="#8e8e8e" stroke-width="1.1"/><path d="M4 11 V14 M6.5 11 V14" stroke="#8e8e8e"/></svg>
<svg style="position:absolute;left:493.5px;top:840px;" width="13" height="13" viewBox="0 0 13 13"><path d="M0.5 0.5 L12.5 6.5 L0.5 12.5 Z" fill="#a9a9a9"/></svg>
<svg style="position:absolute;left:517.5px;top:841px;" width="12" height="12" viewBox="0 0 12 12"><rect x="0.5" y="0.5" width="11" height="11" fill="#9a9a9a"/><rect x="1.5" y="1.5" width="9" height="2" fill="#bcbcbc"/></svg>
<div style="position:absolute;left:536.5px;top:838px;width:2px;height:2px;background:#a9a9a9"></div>
<div style="position:absolute;left:536.5px;top:842px;width:2px;height:2px;background:#a9a9a9"></div>
<div style="position:absolute;left:536.5px;top:846px;width:2px;height:2px;background:#a9a9a9"></div>
<div style="position:absolute;left:536.5px;top:850px;width:2px;height:2px;background:#a9a9a9"></div>
<div style="position:absolute;left:1430px;top:840px;width:2px;height:2px;background:#a9a9a9"></div>
<div style="position:absolute;left:1430px;top:844px;width:2px;height:2px;background:#a9a9a9"></div>
<div style="position:absolute;left:1430px;top:848px;width:2px;height:2px;background:#a9a9a9"></div>
<div style="position:absolute;left:1430px;top:852px;width:2px;height:2px;background:#a9a9a9"></div>
<div style="position:absolute;left:1434px;top:835px;width:23px;height:21px;background:#cce8ff;border:1px solid #99d1ff;box-sizing:border-box"></div>
<svg style="position:absolute;left:1439px;top:839px;" width="15" height="15" viewBox="0 0 15 15"><rect x="0.5" y="0.5" width="14" height="14" fill="#fff" stroke="#3a3a3a"/><path d="M3 4 H12 M3 6.5 H12 M3 9 H12 M3 11.5 H8" stroke="#6f86a3"/></svg>
<svg style="position:absolute;left:1461px;top:839px;" width="15" height="15" viewBox="0 0 15 15"><rect x="0.5" y="0.5" width="14" height="14" fill="#fff" stroke="#3a3a3a"/><rect x="1" y="1" width="4.5" height="13" fill="#a9b9cc"/><path d="M5.5 0.5 V14.5" stroke="#3a3a3a"/><path d="M8 4 H12 M8 6.5 H12 M8 9 H12 M8 11.5 H11" stroke="#6f86a3"/></svg>
<svg style="position:absolute;left:1484px;top:839px;" width="15" height="15" viewBox="0 0 15 15"><rect x="0.5" y="0.5" width="14" height="14" fill="#fffbea" stroke="#3a3a3a"/><circle cx="7.5" cy="7" r="2.3" fill="#87a7c7" stroke="#4b6d90"/><path d="M3.5 14 Q3.5 9.5 7.5 9.5 Q11.5 9.5 11.5 14 Z" fill="#9fbad6" stroke="#4b6d90"/></svg>
<div style="position:absolute;left:1506px;top:835px;width:1px;height:22px;background:#a0a0a0"></div>
<div style="position:absolute;left:1513px;top:845px;width:12px;height:2.5px;background:#26407a"></div>
<svg style="position:absolute;left:1535px;top:840px;" width="14" height="14" viewBox="0 0 14 14"><path d="M7 0.5 V13.5 M0.5 7 H13.5" stroke="#26407a" stroke-width="2.5"/></svg>
<svg style="position:absolute;left:1558px;top:838px;" width="14" height="16" viewBox="0 0 14 16"><path d="M1 3 L2.5 1.5 V7.5 M5 1.5 H7 Q8 1.5 8 3 V6 Q8 7.5 7 7.5 H5 Q4 7.5 4 6 V3 Q4 1.5 5 1.5 Z M10 1.5 H12 Q13 1.5 13 3 V6 Q13 7.5 12 7.5 H10 Q9 7.5 9 6 V3 Q9 1.5 10 1.5 Z" fill="none" stroke="#a2a2a2" stroke-width="1.3"/><path d="M3.5 15 L10.5 9" stroke="#a2a2a2" stroke-width="1.4"/><circle cx="4.3" cy="10" r="1.4" fill="none" stroke="#a2a2a2" stroke-width="1.2"/><circle cx="9.7" cy="14" r="1.4" fill="none" stroke="#a2a2a2" stroke-width="1.2"/></svg>
<svg style="position:absolute;left:1580px;top:838px;" width="17" height="17" viewBox="0 0 17 17"><rect x="1.7" y="1.7" width="13.6" height="13.6" fill="#fff" stroke="#26407a" stroke-width="1.4"/><path d="M4 4 L7 7 M13 4 L10 7 M4 13 L7 10 M13 13 L10 10" stroke="#3458b0" stroke-width="1.4"/><path d="M3.5 7.5 V3.5 H7.5 M9.5 3.5 H13.5 V7.5 M13.5 9.5 V13.5 H9.5 M7.5 13.5 H3.5 V9.5" fill="none" stroke="#3458b0" stroke-width="1.3"/></svg>
<div style="position:absolute;left:43px;top:183px;width:521px;height:577px;background:#f0f0f0;border:1px solid #a3a3a3;box-sizing:border-box;box-shadow:1px 3px 12px rgba(0,0,0,0.26)"></div>
<div style="position:absolute;left:44px;top:184px;width:519px;height:91px;background:#fff"></div>
<svg style="position:absolute;left:44px;top:184px;" width="519" height="91" viewBox="0 0 519 91">
<defs>
<linearGradient id="g1" gradientUnits="userSpaceOnUse" x1="440" x2="519" y1="0" y2="0"><stop offset="0" stop-color="#fbfcfe"/><stop offset="1" stop-color="#e2e8f6"/></linearGradient>
<linearGradient id="g2" gradientUnits="userSpaceOnUse" x1="470" x2="519" y1="0" y2="0"><stop offset="0" stop-color="#edf1fa"/><stop offset="1" stop-color="#d1dbf0"/></linearGradient>
</defs>
<ellipse cx="556" cy="116" rx="116" ry="96" fill="url(#g1)"/>
<ellipse cx="556" cy="116" rx="91" ry="75" fill="url(#g2)"/>
</svg>
<svg style="position:absolute;left:47px;top:188px;" width="17" height="17" viewBox="0 0 17 17">
<defs><linearGradient id="apg" x1="0" y1="0" x2="1" y2="1"><stop offset="0" stop-color="#e6fbf8"/><stop offset="1" stop-color="#a9e3db"/></linearGradient></defs>
<path d="M5.5 15.5 H15.5 V5" fill="none" stroke="#b5b5b5" stroke-width="1"/>
<path d="M3 1.2 H12 Q13.2 1.2 13.2 2.6 V3" fill="none" stroke="#1b5e57" stroke-width="1.5"/>
<path d="M2.6 1.5 Q1.2 1.8 1.2 3.2 V12.6 Q1.2 14 2.6 14" fill="none" stroke="#1b5e57" stroke-width="1.6"/>
<rect x="3" y="2" width="9.5" height="12" fill="url(#apg)"/>
<path d="M2.5 4 L4 4.8 L2.5 5.6 M2.5 7 L4 7.8 L2.5 8.6 M2.5 10 L4 10.8 L2.5 11.6" fill="none" stroke="#fff" stroke-width="0.9"/>
<rect x="5" y="4.5" width="9" height="10" fill="#c9f1ec" stroke="#1b5e57" stroke-width="1.4"/>
<path d="M6.5 13 L9.5 8.5 L12.8 11.5 M9 6.3 H12.5" fill="none" stroke="#2f7d74" stroke-width="1.1"/>
<circle cx="9.5" cy="10" r="1.2" fill="#7fc8bf"/>
</svg>
<div style="position:absolute;left:68.75px;top:189.74px;font:normal 12px 'Liberation Sans';line-height:12px;white-space:pre;color:#a0a0a0;transform:scaleX(0.9731);transform-origin:0 0;">Create Function Overview</div>
<svg style="position:absolute;left:542px;top:190px;" width="12" height="12" viewBox="0 0 12 12"><path d="M1 1 L11 11 M11 1 L1 11" stroke="#6a6a6a" stroke-width="0.9"/></svg>
<div style="position:absolute;left:50.60px;top:220.62px;font:bold 12.5px 'Liberation Sans';line-height:12.5px;white-space:pre;color:#000;transform:scaleX(1.0370);transform-origin:0 0;">Select at least one function to be displayed</div>
<div style="position:absolute;left:58.75px;top:244.37px;font:normal 11.5px 'Liberation Sans';line-height:11.5px;white-space:pre;color:#1a1a1a;transform:scaleX(1.0119);transform-origin:0 0;">Search string (* = any string, ? = any character)</div>
<div style="position:absolute;left:49px;top:280px;width:509px;height:21px;background:#fff;border:1px solid #7a7a7a;box-sizing:border-box"></div>
<div style="position:absolute;left:55.50px;top:285.87px;font:normal 11.5px 'Liberation Sans';line-height:11.5px;white-space:pre;color:#6d6d6d;transform:scaleX(1.0030);transform-origin:0 0;">Type Filter Text</div>
<div style="position:absolute;left:49px;top:306px;width:509px;height:361px;background:#fff;border:1px solid #828282;box-sizing:border-box"></div>
<svg style="position:absolute;left:71px;top:310px;" width="13" height="13" viewBox="0 0 13 13"><rect x="0.5" y="0.5" width="12" height="12" fill="#fff" stroke="#333"/><path d="M2.6 6.4 L5.1 9.3 L10.4 3.3" fill="none" stroke="#1a1a1a" stroke-width="1.5"/></svg>
<div style="position:absolute;left:89.50px;top:309.94px;font:normal 12px 'Liberation Sans';line-height:12px;white-space:pre;color:#000;">BoardComputer</div>
<svg style="position:absolute;left:71px;top:328px;" width="13" height="13" viewBox="0 0 13 13"><rect x="0.5" y="0.5" width="12" height="12" fill="#fff" stroke="#333"/></svg>
<div style="position:absolute;left:89.50px;top:327.94px;font:normal 12px 'Liberation Sans';line-height:12px;white-space:pre;color:#000;transform:scaleX(0.9581);transform-origin:0 0;">DeltaTimeService</div>
<svg style="position:absolute;left:71px;top:346px;" width="13" height="13" viewBox="0 0 13 13"><rect x="0.5" y="0.5" width="12" height="12" fill="#fff" stroke="#333"/><path d="M2.6 6.4 L5.1 9.3 L10.4 3.3" fill="none" stroke="#1a1a1a" stroke-width="1.5"/></svg>
<div style="position:absolute;left:89.50px;top:345.94px;font:normal 12px 'Liberation Sans';line-height:12px;white-space:pre;color:#000;transform:scaleX(0.9867);transform-origin:0 0;">InvokeDisplayToggle</div>
<svg style="position:absolute;left:71px;top:364px;" width="13" height="13" viewBox="0 0 13 13"><rect x="0.5" y="0.5" width="12" height="12" fill="#fff" stroke="#333"/><path d="M2.6 6.4 L5.1 9.3 L10.4 3.3" fill="none" stroke="#1a1a1a" stroke-width="1.5"/></svg>
<div style="position:absolute;left:89.50px;top:363.94px;font:normal 12px 'Liberation Sans';line-height:12px;white-space:pre;color:#000;">VelocitySamplingM</div>
<div style="position:absolute;left:53px;top:676px;width:58px;height:23px;background:#e1e1e1;border:1px solid #adadad;box-sizing:border-box"></div>
<div style="position:absolute;left:58.70px;top:681.84px;font:normal 12px 'Liberation Sans';line-height:12px;white-space:pre;color:#000;transform:scaleX(0.9522);transform-origin:0 0;">Select All</div>
<div style="position:absolute;left:116px;top:676px;width:54px;height:23px;background:#e1e1e1;border:1px solid #adadad;box-sizing:border-box"></div>
<div style="position:absolute;left:121.50px;top:681.84px;font:normal 12px 'Liberation Sans';line-height:12px;white-space:pre;color:#000;transform:scaleX(0.9734);transform-origin:0 0;">Clear All</div>
<div style="position:absolute;left:363px;top:722px;width:90px;height:23px;background:#e1e1e1;border:2px solid #1a6fbf;box-sizing:border-box"></div>
<div style="position:absolute;left:391.40px;top:727.84px;font:normal 12px 'Liberation Sans';line-height:12px;white-space:pre;color:#000;transform:scaleX(0.9381);transform-origin:0 0;">Create</div>
<div style="position:absolute;left:461px;top:722px;width:90px;height:23px;background:#e1e1e1;border:1px solid #adadad;box-sizing:border-box"></div>
<div style="position:absolute;left:488.40px;top:727.84px;font:normal 12px 'Liberation Sans';line-height:12px;white-space:pre;color:#000;transform:scaleX(0.9395);transform-origin:0 0;">Cancel</div>
<div style="position:absolute;left:664px;top:320px;width:200px;height:40px;background:#dfe9fc;border:1px solid;border-color:#50545a #141414;box-sizing:border-box"></div>
<svg style="position:absolute;left:655.5px;top:313.8px;" width="21" height="16" viewBox="0 0 21 16"><rect x="1" y="1" width="19" height="14" rx="4" fill="#fff" stroke="#2a2a2a" stroke-width="1.6"/><path d="M10.5 3.2 V12.8 M5 8 H16" stroke="#000" stroke-width="3"/></svg>
<svg style="position:absolute;left:633px;top:328.3px;" width="34" height="24" viewBox="0 0 34 24"><defs><linearGradient id="q633340" x1="0" y1="0" x2="1" y2="1"><stop offset="0" stop-color="#e6dcd8"/><stop offset="1" stop-color="#bfb1aa"/></linearGradient></defs>
<path d="M1.3 2.2 H21 L30.5 12 L21 21.8 H1.3 Z" fill="#fff" stroke="#5a5a5a" stroke-width="1.8"/>
<rect x="4.5" y="5" width="14" height="14" rx="2" fill="url(#q633340)"/></svg>
<svg style="position:absolute;left:862.7px;top:328px;" width="34" height="24" viewBox="0 0 34 24"><defs><linearGradient id="r862340" x1="0" y1="0" x2="1" y2="1"><stop offset="0" stop-color="#ff8a5c"/><stop offset="0.55" stop-color="#ff4a1c"/><stop offset="1" stop-color="#c8300e"/></linearGradient></defs>
<path d="M1.7 2.2 H22 L30.5 12 L22 21.8 H1.7 Z" fill="#fff" stroke="#22bb22" stroke-width="3" stroke-linejoin="miter"/>
<rect x="4.5" y="5" width="14" height="14" rx="2" fill="url(#r862340)" stroke="#b83a20" stroke-width="0.6"/></svg>
<div style="position:absolute;left:668.60px;top:335.49px;font:normal 11px 'Liberation Sans';line-height:11px;white-space:pre;color:#2a2a9c;transform:scaleX(0.9607);transform-origin:0 0;">s_v_mps</div>
<div style="position:absolute;left:828.30px;top:335.49px;font:normal 11px 'Liberation Sans';line-height:11px;white-space:pre;color:#2a2a9c;transform:scaleX(0.9381);transform-origin:0 0;">v_mps</div>
<div style="position:absolute;left:720.00px;top:367.09px;font:normal 11px 'Liberation Sans';line-height:11px;white-space:pre;color:#30309e;transform:scaleX(0.9383);transform-origin:0 0;">VelocitySamplingM</div>
<div style="position:absolute;left:893px;top:339px;width:20px;height:3px;background:#22bb22"></div>
<div style="position:absolute;left:944px;top:312px;width:200px;height:131px;background:#dfe9fc;border:1px solid;border-color:#50545a #141414;box-sizing:border-box"></div>
<svg style="position:absolute;left:912.5px;top:328px;" width="34" height="24" viewBox="0 0 34 24"><defs><linearGradient id="r912340" x1="0" y1="0" x2="1" y2="1"><stop offset="0" stop-color="#ff8a5c"/><stop offset="0.55" stop-color="#ff4a1c"/><stop offset="1" stop-color="#c8300e"/></linearGradient></defs>
<path d="M1.7 2.2 H22 L30.5 12 L22 21.8 H1.7 Z" fill="#fff" stroke="#22bb22" stroke-width="3" stroke-linejoin="miter"/>
<rect x="4.5" y="5" width="14" height="14" rx="2" fill="url(#r912340)" stroke="#b83a20" stroke-width="0.6"/></svg>
<svg style="position:absolute;left:912.5px;top:365.5px;" width="34" height="24" viewBox="0 0 34 24"><defs><linearGradient id="q912377" x1="0" y1="0" x2="1" y2="1"><stop offset="0" stop-color="#e6dcd8"/><stop offset="1" stop-color="#bfb1aa"/></linearGradient></defs>
<path d="M1.3 2.2 H21 L30.5 12 L21 21.8 H1.3 Z" fill="#fff" stroke="#5a5a5a" stroke-width="1.8"/>
<rect x="4.5" y="5" width="14" height="14" rx="2" fill="url(#q912377)"/></svg>
<svg style="position:absolute;left:912.5px;top:403px;" width="34" height="24" viewBox="0 0 34 24"><defs><linearGradient id="q912415" x1="0" y1="0" x2="1" y2="1"><stop offset="0" stop-color="#e6dcd8"/><stop offset="1" stop-color="#bfb1aa"/></linearGradient></defs>
<path d="M1.3 2.2 H21 L30.5 12 L21 21.8 H1.3 Z" fill="#fff" stroke="#5a5a5a" stroke-width="1.8"/>
<rect x="4.5" y="5" width="14" height="14" rx="2" fill="url(#q912415)"/></svg>
<svg style="position:absolute;left:935.8px;top:306.5px;" width="21" height="16" viewBox="0 0 21 16"><rect x="1" y="1" width="19" height="14" rx="4" fill="#fff" stroke="#2a2a2a" stroke-width="1.6"/><path d="M10.5 3.2 V12.8 M5 8 H16" stroke="#000" stroke-width="3"/></svg>
<svg style="position:absolute;left:1142.5px;top:320.3px;" width="34" height="24" viewBox="0 0 34 24"><defs><linearGradient id="r1142332" x1="0" y1="0" x2="1" y2="1"><stop offset="0" stop-color="#ff8a5c"/><stop offset="0.55" stop-color="#ff4a1c"/><stop offset="1" stop-color="#c8300e"/></linearGradient></defs>
<path d="M1.7 2.2 H22 L30.5 12 L22 21.8 H1.7 Z" fill="#fff" stroke="#22bb22" stroke-width="3" stroke-linejoin="miter"/>
<rect x="4.5" y="5" width="14" height="14" rx="2" fill="url(#r1142332)" stroke="#b83a20" stroke-width="0.6"/></svg>
<div style="position:absolute;left:1173px;top:330.8px;width:20px;height:3px;background:#22bb22"></div>
<svg style="position:absolute;left:1192.5px;top:320.3px;" width="34" height="24" viewBox="0 0 34 24"><defs><linearGradient id="r1192332" x1="0" y1="0" x2="1" y2="1"><stop offset="0" stop-color="#ff8a5c"/><stop offset="0.55" stop-color="#ff4a1c"/><stop offset="1" stop-color="#c8300e"/></linearGradient></defs>
<path d="M1.7 2.2 H22 L30.5 12 L22 21.8 H1.7 Z" fill="#fff" stroke="#22bb22" stroke-width="3" stroke-linejoin="miter"/>
<rect x="4.5" y="5" width="14" height="14" rx="2" fill="url(#r1192332)" stroke="#b83a20" stroke-width="0.6"/></svg>
<svg style="position:absolute;left:1142.5px;top:350.3px;" width="34" height="24" viewBox="0 0 34 24"><defs><linearGradient id="r1142362" x1="0" y1="0" x2="1" y2="1"><stop offset="0" stop-color="#ff8a5c"/><stop offset="0.55" stop-color="#ff4a1c"/><stop offset="1" stop-color="#c8300e"/></linearGradient></defs>
<path d="M1.7 2.2 H22 L30.5 12 L22 21.8 H1.7 Z" fill="#fff" stroke="#22bb22" stroke-width="3" stroke-linejoin="miter"/>
<rect x="4.5" y="5" width="14" height="14" rx="2" fill="url(#r1142362)" stroke="#b83a20" stroke-width="0.6"/></svg>
<div style="position:absolute;left:1173px;top:360.8px;width:20px;height:3px;background:#22bb22"></div>
<svg style="position:absolute;left:1192.5px;top:350.3px;" width="34" height="24" viewBox="0 0 34 24"><defs><linearGradient id="r1192362" x1="0" y1="0" x2="1" y2="1"><stop offset="0" stop-color="#ff8a5c"/><stop offset="0.55" stop-color="#ff4a1c"/><stop offset="1" stop-color="#c8300e"/></linearGradient></defs>
<path d="M1.7 2.2 H22 L30.5 12 L22 21.8 H1.7 Z" fill="#fff" stroke="#22bb22" stroke-width="3" stroke-linejoin="miter"/>
<rect x="4.5" y="5" width="14" height="14" rx="2" fill="url(#r1192362)" stroke="#b83a20" stroke-width="0.6"/></svg>
<svg style="position:absolute;left:1142.5px;top:380.3px;" width="34" height="24" viewBox="0 0 34 24"><defs><linearGradient id="r1142392" x1="0" y1="0" x2="1" y2="1"><stop offset="0" stop-color="#ff8a5c"/><stop offset="0.55" stop-color="#ff4a1c"/><stop offset="1" stop-color="#c8300e"/></linearGradient></defs>
<path d="M1.7 2.2 H22 L30.5 12 L22 21.8 H1.7 Z" fill="#fff" stroke="#22bb22" stroke-width="3" stroke-linejoin="miter"/>
<rect x="4.5" y="5" width="14" height="14" rx="2" fill="url(#r1142392)" stroke="#b83a20" stroke-width="0.6"/></svg>
<div style="position:absolute;left:1173px;top:390.8px;width:20px;height:3px;background:#22bb22"></div>
<svg style="position:absolute;left:1192.5px;top:380.3px;" width="34" height="24" viewBox="0 0 34 24"><defs><linearGradient id="r1192392" x1="0" y1="0" x2="1" y2="1"><stop offset="0" stop-color="#ff8a5c"/><stop offset="0.55" stop-color="#ff4a1c"/><stop offset="1" stop-color="#c8300e"/></linearGradient></defs>
<path d="M1.7 2.2 H22 L30.5 12 L22 21.8 H1.7 Z" fill="#fff" stroke="#22bb22" stroke-width="3" stroke-linejoin="miter"/>
<rect x="4.5" y="5" width="14" height="14" rx="2" fill="url(#r1192392)" stroke="#b83a20" stroke-width="0.6"/></svg>
<svg style="position:absolute;left:1142.5px;top:410.3px;" width="34" height="24" viewBox="0 0 34 24"><defs><linearGradient id="r1142422" x1="0" y1="0" x2="1" y2="1"><stop offset="0" stop-color="#ff8a5c"/><stop offset="0.55" stop-color="#ff4a1c"/><stop offset="1" stop-color="#c8300e"/></linearGradient></defs>
<path d="M1.7 2.2 H22 L30.5 12 L22 21.8 H1.7 Z" fill="#fff" stroke="#22bb22" stroke-width="3" stroke-linejoin="miter"/>
<rect x="4.5" y="5" width="14" height="14" rx="2" fill="url(#r1142422)" stroke="#b83a20" stroke-width="0.6"/></svg>
<div style="position:absolute;left:1173px;top:420.8px;width:20px;height:3px;background:#22bb22"></div>
<svg style="position:absolute;left:1192.5px;top:410.3px;" width="34" height="24" viewBox="0 0 34 24"><defs><linearGradient id="r1192422" x1="0" y1="0" x2="1" y2="1"><stop offset="0" stop-color="#ff8a5c"/><stop offset="0.55" stop-color="#ff4a1c"/><stop offset="1" stop-color="#c8300e"/></linearGradient></defs>
<path d="M1.7 2.2 H22 L30.5 12 L22 21.8 H1.7 Z" fill="#fff" stroke="#22bb22" stroke-width="3" stroke-linejoin="miter"/>
<rect x="4.5" y="5" width="14" height="14" rx="2" fill="url(#r1192422)" stroke="#b83a20" stroke-width="0.6"/></svg>
<div style="position:absolute;left:949.00px;top:334.69px;font:normal 11px 'Liberation Sans';line-height:11px;white-space:pre;color:#2a2a9c;transform:scaleX(0.9443);transform-origin:0 0;">v_mps</div>
<div style="position:absolute;left:949.00px;top:371.99px;font:normal 11px 'Liberation Sans';line-height:11px;white-space:pre;color:#2a2a9c;transform:scaleX(0.9928);transform-origin:0 0;">u_t_air</div>
<div style="position:absolute;left:949.00px;top:409.69px;font:normal 11px 'Liberation Sans';line-height:11px;white-space:pre;color:#2a2a9c;transform:scaleX(0.9701);transform-origin:0 0;">c_reset</div>
<div style="position:absolute;left:1107.50px;top:326.69px;font:normal 11px 'Liberation Sans';line-height:11px;white-space:pre;color:#2a2a9c;transform:scaleX(0.9257);transform-origin:0 0;">v_kmh</div>
<div style="position:absolute;left:1122.00px;top:356.69px;font:normal 11px 'Liberation Sans';line-height:11px;white-space:pre;color:#2a2a9c;transform:scaleX(0.9343);transform-origin:0 0;">dist</div>
<div style="position:absolute;left:1116.40px;top:386.69px;font:normal 11px 'Liberation Sans';line-height:11px;white-space:pre;color:#2a2a9c;transform:scaleX(1.0091);transform-origin:0 0;">t_air</div>
<div style="position:absolute;left:1085.00px;top:416.69px;font:normal 11px 'Liberation Sans';line-height:11px;white-space:pre;color:#2a2a9c;transform:scaleX(0.9846);transform-origin:0 0;">avg_speed</div>
<div style="position:absolute;left:1006.40px;top:448.89px;font:normal 11px 'Liberation Sans';line-height:11px;white-space:pre;color:#30309e;transform:scaleX(0.9606);transform-origin:0 0;">BoardComputer</div>
<div style="position:absolute;left:1224px;top:313px;width:200px;height:160px;background:#dfe9fc;border:1px solid;border-color:#50545a #141414;box-sizing:border-box"></div>
<svg style="position:absolute;left:1215.8px;top:306.5px;" width="21" height="16" viewBox="0 0 21 16"><rect x="1" y="1" width="19" height="14" rx="4" fill="#fff" stroke="#2a2a2a" stroke-width="1.6"/><path d="M10.5 3.2 V12.8 M5 8 H16" stroke="#000" stroke-width="3"/></svg>
<svg style="position:absolute;left:1192.5px;top:440.3px;" width="34" height="24" viewBox="0 0 34 24"><defs><linearGradient id="q1192452" x1="0" y1="0" x2="1" y2="1"><stop offset="0" stop-color="#e6dcd8"/><stop offset="1" stop-color="#bfb1aa"/></linearGradient></defs>
<path d="M1.3 2.2 H21 L30.5 12 L21 21.8 H1.3 Z" fill="#fff" stroke="#5a5a5a" stroke-width="1.8"/>
<rect x="4.5" y="5" width="14" height="14" rx="2" fill="url(#q1192452)"/></svg>
<svg style="position:absolute;left:1422.5px;top:350.3px;" width="34" height="24" viewBox="0 0 34 24"><defs><linearGradient id="q1422362" x1="0" y1="0" x2="1" y2="1"><stop offset="0" stop-color="#e6dcd8"/><stop offset="1" stop-color="#bfb1aa"/></linearGradient></defs>
<path d="M1.3 2.2 H21 L30.5 12 L21 21.8 H1.3 Z" fill="#fff" stroke="#5a5a5a" stroke-width="1.8"/>
<rect x="4.5" y="5" width="14" height="14" rx="2" fill="url(#q1422362)"/></svg>
<svg style="position:absolute;left:1422.5px;top:410.5px;" width="34" height="24" viewBox="0 0 34 24"><defs><linearGradient id="q1422422" x1="0" y1="0" x2="1" y2="1"><stop offset="0" stop-color="#e6dcd8"/><stop offset="1" stop-color="#bfb1aa"/></linearGradient></defs>
<path d="M1.3 2.2 H21 L30.5 12 L21 21.8 H1.3 Z" fill="#fff" stroke="#5a5a5a" stroke-width="1.8"/>
<rect x="4.5" y="5" width="14" height="14" rx="2" fill="url(#q1422422)"/></svg>
<div style="position:absolute;left:1228.80px;top:326.69px;font:normal 11px 'Liberation Sans';line-height:11px;white-space:pre;color:#2a2a9c;transform:scaleX(0.9257);transform-origin:0 0;">v_kmh</div>
<div style="position:absolute;left:1228.80px;top:356.69px;font:normal 11px 'Liberation Sans';line-height:11px;white-space:pre;color:#2a2a9c;transform:scaleX(0.9343);transform-origin:0 0;">dist</div>
<div style="position:absolute;left:1228.80px;top:386.69px;font:normal 11px 'Liberation Sans';line-height:11px;white-space:pre;color:#2a2a9c;transform:scaleX(0.9810);transform-origin:0 0;">t_air</div>
<div style="position:absolute;left:1228.80px;top:416.69px;font:normal 11px 'Liberation Sans';line-height:11px;white-space:pre;color:#2a2a9c;transform:scaleX(0.9846);transform-origin:0 0;">avg_speed</div>
<div style="position:absolute;left:1228.80px;top:446.69px;font:normal 11px 'Liberation Sans';line-height:11px;white-space:pre;color:#2a2a9c;transform:scaleX(0.9343);transform-origin:0 0;">key</div>
<div style="position:absolute;left:1374.00px;top:356.69px;font:normal 11px 'Liberation Sans';line-height:11px;white-space:pre;color:#2a2a9c;transform:scaleX(0.9347);transform-origin:0 0;">dispValue</div>
<div style="position:absolute;left:1354.40px;top:416.69px;font:normal 11px 'Liberation Sans';line-height:11px;white-space:pre;color:#2a2a9c;transform:scaleX(1.0330);transform-origin:0 0;">frostWarning</div>
<div style="position:absolute;left:1274.20px;top:479.29px;font:normal 11px 'Liberation Sans';line-height:11px;white-space:pre;color:#30309e;transform:scaleX(0.9793);transform-origin:0 0;">InvokeDisplayToggle</div>
</body></html>
